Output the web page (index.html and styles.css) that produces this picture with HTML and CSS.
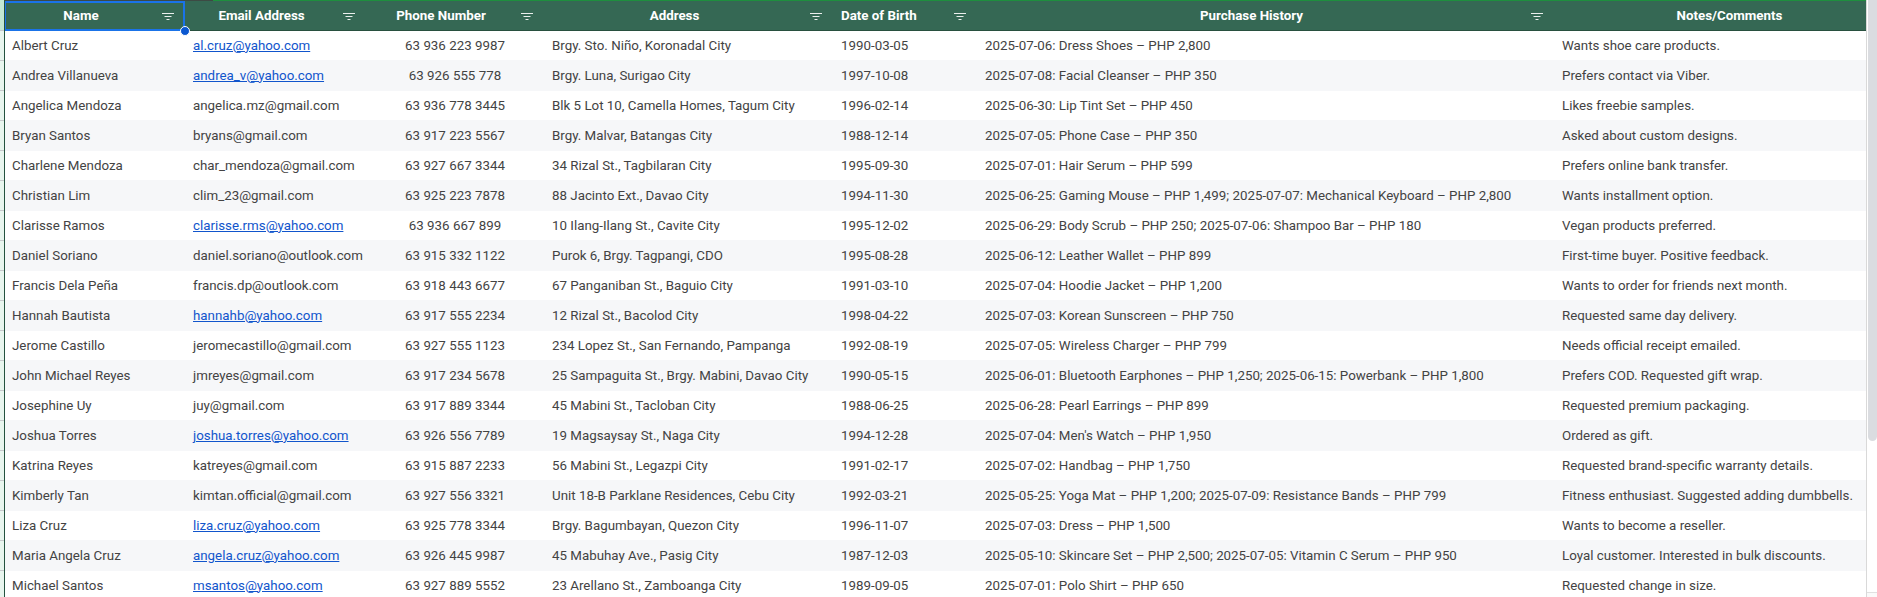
FILE: index.html
```html
<!DOCTYPE html>
<html lang="en">
<head>
<meta charset="utf-8">
<title>Customers</title>
<link rel="stylesheet" href="styles.css">
</head>
<body>
<div class="shell">
  <div class="gutter">
    <i class="gutter-head"></i><i></i><i></i><i></i><i></i><i></i><i></i><i></i><i></i><i></i><i></i><i></i><i></i><i></i><i></i><i></i><i></i><i></i><i></i><i></i>
  </div>
  <div class="sheet">
    <div class="topline"><span class="topline-dark"></span><span class="topline-green"></span></div>
    <div class="row head">
      <div class="th selected">Name<svg class="filter" viewBox="0 0 12 8"><path d="M0 .5h12M2.5 3.5h7M4.5 6.5h3"/></svg><span class="handle"></span></div>
      <div class="th">Email Address<svg class="filter" viewBox="0 0 12 8"><path d="M0 .5h12M2.5 3.5h7M4.5 6.5h3"/></svg></div>
      <div class="th">Phone Number<svg class="filter" viewBox="0 0 12 8"><path d="M0 .5h12M2.5 3.5h7M4.5 6.5h3"/></svg></div>
      <div class="th">Address<svg class="filter" viewBox="0 0 12 8"><path d="M0 .5h12M2.5 3.5h7M4.5 6.5h3"/></svg></div>
      <div class="th dob-head">Date of Birth<svg class="filter" viewBox="0 0 12 8"><path d="M0 .5h12M2.5 3.5h7M4.5 6.5h3"/></svg></div>
      <div class="th">Purchase History<svg class="filter" viewBox="0 0 12 8"><path d="M0 .5h12M2.5 3.5h7M4.5 6.5h3"/></svg></div>
      <div class="th notes-head">Notes/Comments</div>
    </div>
    <div class="row"><div>Albert Cruz</div><div><a href="#">al.cruz@yahoo.com</a></div><div class="phone">63 936 223 9987</div><div>Brgy. Sto. Niño, Koronadal City</div><div>1990-03-05</div><div>2025-07-06: Dress Shoes – PHP 2,800</div><div>Wants shoe care products.</div></div>
    <div class="row"><div>Andrea Villanueva</div><div><a href="#">andrea_v@yahoo.com</a></div><div class="phone">63 926 555 778</div><div>Brgy. Luna, Surigao City</div><div>1997-10-08</div><div>2025-07-08: Facial Cleanser – PHP 350</div><div>Prefers contact via Viber.</div></div>
    <div class="row"><div>Angelica Mendoza</div><div>angelica.mz@gmail.com</div><div class="phone">63 936 778 3445</div><div>Blk 5 Lot 10, Camella Homes, Tagum City</div><div>1996-02-14</div><div>2025-06-30: Lip Tint Set – PHP 450</div><div>Likes freebie samples.</div></div>
    <div class="row"><div>Bryan Santos</div><div>bryans@gmail.com</div><div class="phone">63 917 223 5567</div><div>Brgy. Malvar, Batangas City</div><div>1988-12-14</div><div>2025-07-05: Phone Case – PHP 350</div><div>Asked about custom designs.</div></div>
    <div class="row"><div>Charlene Mendoza</div><div>char_mendoza@gmail.com</div><div class="phone">63 927 667 3344</div><div>34 Rizal St., Tagbilaran City</div><div>1995-09-30</div><div>2025-07-01: Hair Serum – PHP 599</div><div>Prefers online bank transfer.</div></div>
    <div class="row"><div>Christian Lim</div><div>clim_23@gmail.com</div><div class="phone">63 925 223 7878</div><div>88 Jacinto Ext., Davao City</div><div>1994-11-30</div><div>2025-06-25: Gaming Mouse – PHP 1,499; 2025-07-07: Mechanical Keyboard – PHP 2,800</div><div>Wants installment option.</div></div>
    <div class="row"><div>Clarisse Ramos</div><div><a href="#">clarisse.rms@yahoo.com</a></div><div class="phone">63 936 667 899</div><div>10 Ilang-Ilang St., Cavite City</div><div>1995-12-02</div><div>2025-06-29: Body Scrub – PHP 250; 2025-07-06: Shampoo Bar – PHP 180</div><div>Vegan products preferred.</div></div>
    <div class="row"><div>Daniel Soriano</div><div>daniel.soriano@outlook.com</div><div class="phone">63 915 332 1122</div><div>Purok 6, Brgy. Tagpangi, CDO</div><div>1995-08-28</div><div>2025-06-12: Leather Wallet – PHP 899</div><div>First-time buyer. Positive feedback.</div></div>
    <div class="row"><div>Francis Dela Peña</div><div>francis.dp@outlook.com</div><div class="phone">63 918 443 6677</div><div>67 Panganiban St., Baguio City</div><div>1991-03-10</div><div>2025-07-04: Hoodie Jacket – PHP 1,200</div><div>Wants to order for friends next month.</div></div>
    <div class="row"><div>Hannah Bautista</div><div><a href="#">hannahb@yahoo.com</a></div><div class="phone">63 917 555 2234</div><div>12 Rizal St., Bacolod City</div><div>1998-04-22</div><div>2025-07-03: Korean Sunscreen – PHP 750</div><div>Requested same day delivery.</div></div>
    <div class="row"><div>Jerome Castillo</div><div>jeromecastillo@gmail.com</div><div class="phone">63 927 555 1123</div><div>234 Lopez St., San Fernando, Pampanga</div><div>1992-08-19</div><div>2025-07-05: Wireless Charger – PHP 799</div><div>Needs official receipt emailed.</div></div>
    <div class="row"><div>John Michael Reyes</div><div>jmreyes@gmail.com</div><div class="phone">63 917 234 5678</div><div>25 Sampaguita St., Brgy. Mabini, Davao City</div><div>1990-05-15</div><div>2025-06-01: Bluetooth Earphones – PHP 1,250; 2025-06-15: Powerbank – PHP 1,800</div><div>Prefers COD. Requested gift wrap.</div></div>
    <div class="row"><div>Josephine Uy</div><div>juy@gmail.com</div><div class="phone">63 917 889 3344</div><div>45 Mabini St., Tacloban City</div><div>1988-06-25</div><div>2025-06-28: Pearl Earrings – PHP 899</div><div>Requested premium packaging.</div></div>
    <div class="row"><div>Joshua Torres</div><div><a href="#">joshua.torres@yahoo.com</a></div><div class="phone">63 926 556 7789</div><div>19 Magsaysay St., Naga City</div><div>1994-12-28</div><div>2025-07-04: Men's Watch – PHP 1,950</div><div>Ordered as gift.</div></div>
    <div class="row"><div>Katrina Reyes</div><div>katreyes@gmail.com</div><div class="phone">63 915 887 2233</div><div>56 Mabini St., Legazpi City</div><div>1991-02-17</div><div>2025-07-02: Handbag – PHP 1,750</div><div>Requested brand-specific warranty details.</div></div>
    <div class="row"><div>Kimberly Tan</div><div>kimtan.official@gmail.com</div><div class="phone">63 927 556 3321</div><div>Unit 18-B Parklane Residences, Cebu City</div><div>1992-03-21</div><div>2025-05-25: Yoga Mat – PHP 1,200; 2025-07-09: Resistance Bands – PHP 799</div><div>Fitness enthusiast. Suggested adding dumbbells.</div></div>
    <div class="row"><div>Liza Cruz</div><div><a href="#">liza.cruz@yahoo.com</a></div><div class="phone">63 925 778 3344</div><div>Brgy. Bagumbayan, Quezon City</div><div>1996-11-07</div><div>2025-07-03: Dress – PHP 1,500</div><div>Wants to become a reseller.</div></div>
    <div class="row"><div>Maria Angela Cruz</div><div><a href="#">angela.cruz@yahoo.com</a></div><div class="phone">63 926 445 9987</div><div>45 Mabuhay Ave., Pasig City</div><div>1987-12-03</div><div>2025-05-10: Skincare Set – PHP 2,500; 2025-07-05: Vitamin C Serum – PHP 950</div><div>Loyal customer. Interested in bulk discounts.</div></div>
    <div class="row"><div>Michael Santos</div><div><a href="#">msantos@yahoo.com</a></div><div class="phone">63 927 889 5552</div><div>23 Arellano St., Zamboanga City</div><div>1989-09-05</div><div>2025-07-01: Polo Shirt – PHP 650</div><div>Requested change in size.</div></div>
  </div>
  <div class="scroll"><div class="thumb"></div><div class="corner"></div></div>
</div>
</body>
</html>
```

FILE: styles.css
```css
* { box-sizing: border-box; }
html, body { margin: 0; height: 100%; overflow: hidden; background: #fff; }
body { font-family: Roboto, "Liberation Sans", sans-serif; font-size: 13.33px; color: #434343; }

.shell { display: flex; width: 1877px; height: 597px; overflow: hidden; }

.gutter { flex: 0 0 4px; display: flex; flex-direction: column; background: #e8f5ee; }
.gutter i { flex: 0 0 30px; border-bottom: 1px solid #c7c9cc; }
.gutter .gutter-head { flex: 0 0 31px; background: #c3e8d3; }

.sheet { flex: 0 0 1862px; border-left: 1px solid #24523f; height: 597px; overflow: hidden; }

.topline { display: flex; height: 1px; margin-left: -1px; }
.topline-dark { flex: 0 0 209px; background: #3d4a44; }
.topline-green { flex: 1; background: #1e8e3e; }

.row { display: grid; grid-template-columns: 180px 181px 178px 289px 144px 577px 312px; height: 30px; align-items: center; white-space: nowrap; }
.row > div { padding: 0 0 2px 8px; height: 100%; display: flex; align-items: center; min-width: 0; }
.row > div:first-child { padding-left: 7px; }
.row:nth-child(even) { background: #f6f7f9; box-shadow: 0 -1px 0 #f6f7f9; position: relative; }

.row > .phone { justify-content: center; padding-left: 0; }

.row.head { background: #356854; border-bottom: 1px solid #28503f; color: #fff; font-weight: 700; box-shadow: none; position: relative; }
.row.head > .th { position: relative; justify-content: center; padding: 0 28px 0 0; }
.row.head > .dob-head { justify-content: flex-start; padding: 0 0 0 8px; }
.row.head > .notes-head { padding: 0 0 0 39px; }

.selected::after { content: ""; position: absolute; top: 0; right: 0; bottom: -1px; left: -1px; border: 2px solid #1a73e8; }

.filter { position: absolute; right: 11px; top: 12px; width: 12px; height: 8px; fill: none; stroke: #fff; stroke-width: .9; }
.handle { position: absolute; right: -5px; bottom: -6px; width: 10px; height: 10px; border-radius: 50%; background: #0b57d0; border: 1px solid #fff; z-index: 2; }

a { color: #1155cc; text-decoration: underline; }

.scroll { flex: 0 0 11px; display: flex; flex-direction: column; justify-content: space-between; border-left: 1px solid #d9d9d9; padding-left: 1px; background: #fff; }
.thumb { height: 441px; background: #dadce0; border-radius: 0 0 5px 5px; }
.corner { height: 5px; margin-left: -1px; border-top: 1px solid #e0e0e0; background: #fafafa; }
```
